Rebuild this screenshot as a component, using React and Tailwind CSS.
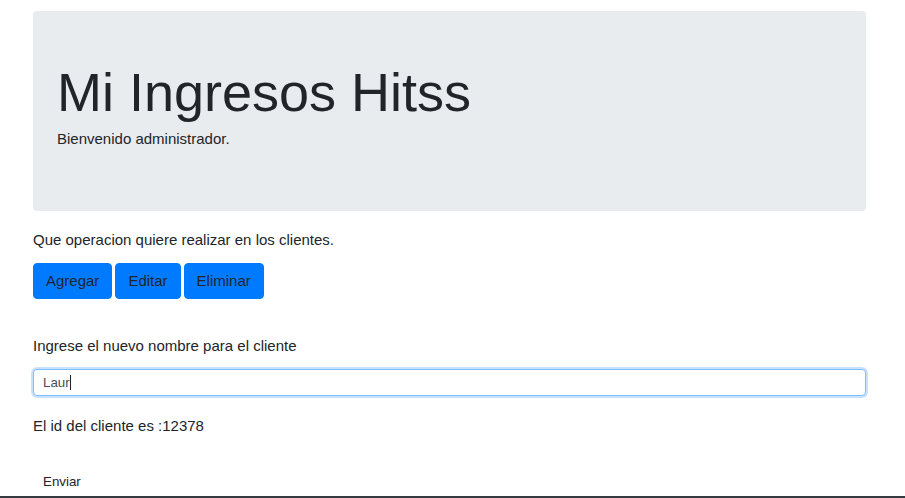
import React from "react";

export default function App() {
  return (
    <div className="min-h-[498px] bg-white text-[#212529] text-[15px] leading-[22.5px] font-['Liberation_Sans',Arial,sans-serif]">
      <div className="w-[833px] ml-[33px] pt-[11px]">
        <div className="h-[200px] rounded bg-[#e9ecef] pl-6 pt-[49px]">
          <h1 className="text-[54px] leading-[1.2] font-normal m-0">Mi Ingresos Hitss</h1>
          <p className="mt-[3px]">Bienvenido administrador.</p>
        </div>

        <p className="mt-[18px]">Que operacion quiere realizar en los clientes.</p>

        <div className="mt-[11px] flex gap-[3px]">
          <button className="rounded border border-[#007bff] bg-[#007bff] px-3 py-[6px] leading-[22.5px] text-[#212529]">Agregar</button>
          <button className="rounded border border-[#007bff] bg-[#007bff] px-3 py-[6px] leading-[22.5px] text-[#212529]">Editar</button>
          <button className="rounded border border-[#007bff] bg-[#007bff] px-3 py-[6px] leading-[22.5px] text-[#212529]">Eliminar</button>
        </div>

        <p className="mt-[36px]">Ingrese el nuevo nombre para el cliente</p>

        <div className="relative mt-[11px] h-[27px]">
          <input
            readOnly
            value="Laur"
            className="block h-[27px] w-full rounded border border-[#80bdff] bg-white px-[9px] text-[13.33px] text-[#495057] caret-transparent outline-none shadow-[0_0_0_2px_rgba(0,123,255,0.22)] font-['Liberation_Sans',Arial,sans-serif]"
          />
          <div className="pointer-events-none absolute inset-y-0 left-[10px] flex items-center text-[13.33px] font-['Liberation_Sans',Arial,sans-serif]">
            <span className="invisible">Laur</span>
            <span className="inline-block h-[15px] w-px bg-[#212529]"></span>
          </div>
        </div>

        <p className="mt-[19px]">El id del cliente es :12378</p>

        <button className="mt-[37px] block border-0 bg-transparent px-[10px] py-0 text-[13.33px] leading-[15px] text-[#212529] font-['Liberation_Sans',Arial,sans-serif]">Enviar</button>
      </div>
      <div className="mt-[7px] h-[40px] bg-[#343a40]"></div>
    </div>
  );
}
